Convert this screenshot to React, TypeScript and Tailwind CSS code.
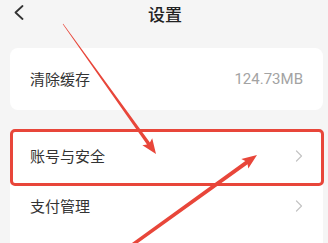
import React from 'react';

const FONT = "'Noto Sans CJK SC', 'Noto Sans', sans-serif";

function arrowPoints(tail: [number, number], tip: [number, number], w0: number, w1: number, headLen: number, headW: number) {
  const [x0, y0] = tail;
  const [x1, y1] = tip;
  const dx = x1 - x0;
  const dy = y1 - y0;
  const len = Math.hypot(dx, dy);
  const ux = dx / len;
  const uy = dy / len;
  const nx = -uy;
  const ny = ux;
  const bx = x1 - ux * headLen;
  const by = y1 - uy * headLen;
  const pts: [number, number][] = [
    [x0 + nx * w0 / 2, y0 + ny * w0 / 2],
    [bx + nx * w1 / 2, by + ny * w1 / 2],
    [bx + nx * headW / 2 - ux * 2, by + ny * headW / 2 - uy * 2],
    [x1, y1],
    [bx - nx * headW / 2 - ux * 2, by - ny * headW / 2 - uy * 2],
    [bx - nx * w1 / 2, by - ny * w1 / 2],
    [x0 - nx * w0 / 2, y0 - ny * w0 / 2],
  ];
  return pts.map(p => p.map(v => v.toFixed(1)).join(',')).join(' ');
}

function Chevron() {
  return (
    <svg width="8" height="12" viewBox="0 0 8 12" fill="none">
      <path d="M1.5 1 L6.5 6 L1.5 11" stroke="#c4c4c4" strokeWidth="1.2" strokeLinecap="round" strokeLinejoin="round" />
    </svg>
  );
}

function Row({ label, right }: { label?: string; right?: React.ReactNode }) {
  return (
    <div className="flex items-center justify-between h-[50px] pl-[20px] pr-[20px]">
      <span className="text-[15px] text-[#333]" style={{ fontFamily: FONT }}>{label}</span>
      {right}
    </div>
  );
}

export default function App() {
  return (
    <div className="relative w-[328px] h-[243px] overflow-hidden bg-[#f5f5f5]">
      {/* Header */}
      <div className="relative flex items-center justify-center h-[27px]">
        <svg className="absolute left-[13px] top-[5px]" width="12" height="15" viewBox="0 0 12 15" fill="none">
          <path d="M9.5 1 L2.5 7.5 L9.5 14" stroke="#333" strokeWidth="1.8" strokeLinecap="round" strokeLinejoin="round" />
        </svg>
        <span className="text-[17px] font-medium text-[#222] pl-[2px]" style={{ fontFamily: FONT }}>设置</span>
      </div>

      <div className="ml-[10px] mr-[5px] mt-[21px] h-[62px] rounded-lg bg-white flex items-center justify-between pl-[20px] pr-[20px]">
        <span className="text-[15px] text-[#333]" style={{ fontFamily: FONT }}>清除缓存</span>
        <span className="text-[15px] text-[#a3a3a3]" style={{ fontFamily: "Roboto, 'Noto Sans', sans-serif" }}>124.73MB</span>
      </div>

      <div className="ml-[10px] mr-[5px] mt-[21px] rounded-lg bg-white flex flex-col">
        <Row label="账号与安全" right={<Chevron />} />
        <Row label="支付管理" right={<Chevron />} />
        <Row />
      </div>

      {/* Annotation overlay */}
      <div className="absolute left-[10px] top-[129px] w-[314px] h-[57px] border-[3px] border-[#e8463a] rounded-[5px] pointer-events-none" />
      <svg className="absolute left-0 top-0 pointer-events-none" width="328" height="243" viewBox="0 0 328 243">
        <polygon points={arrowPoints([63, 24], [156, 154], 0.6, 3.5, 13, 12)} fill="#e8463a" />
        <polygon points={arrowPoints([128, 248], [257, 155], 3.5, 4, 13, 12)} fill="#e8463a" />
      </svg>
    </div>
  );
}
